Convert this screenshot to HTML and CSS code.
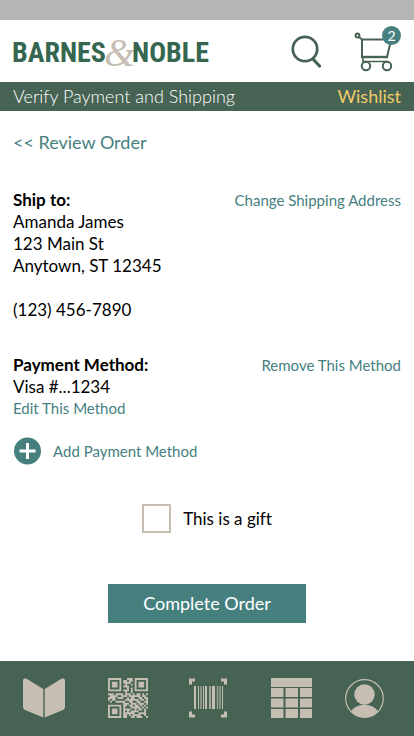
FILE: index.html
```html
<!DOCTYPE html>
<html lang="en">
<head>
<meta charset="utf-8">
<meta name="viewport" content="width=device-width, initial-scale=1">
<title>Verify Payment and Shipping</title>
<link rel="stylesheet" href="styles.css">
</head>
<body>
<div class="status"></div>
<header class="header">
  <a class="logo" href="#">BARNES<span class="amp">&amp;</span>NOBLE</a>
  <div class="tools">
    <button class="icon-button" type="button" aria-label="Search">
      <svg width="32" height="34" viewBox="0 0 32 34" fill="none" stroke="#466353"><circle cx="14" cy="15" r="12.2" stroke-width="2.8"/><path d="M22 25l6.500 7" stroke-width="3.200" stroke-linecap="round"/></svg>
    </button>
    <a class="cart" href="#" aria-label="Cart">
      <svg width="40" height="40" viewBox="0 0 40 40" fill="none" stroke="#466353" stroke-width="2"><circle cx="3.500" cy="3.500" r="1.900"/><path d="M5 5l3 2.500V25.500M8 7.500h29l-4 18"/><path d="M7 25h27" stroke-width="2.400"/><path d="M9 26v3.500h25" stroke-width="1.600"/><circle cx="12" cy="34" r="4.200"/><circle cx="33" cy="34" r="4.200"/></svg>
      <span class="count">2</span>
    </a>
  </div>
</header>
<div class="titlebar">
  <h1 class="title">Verify Payment and Shipping</h1>
  <a class="wishlist" href="#">Wishlist</a>
</div>
<main class="main">
  <a class="back" href="#">&lt;&lt; Review Order</a>
  <section class="block">
    <div class="row">
      <h2 class="heading">Ship to:</h2>
      <a class="link" href="#">Change Shipping Address</a>
    </div>
    <address class="address">Amanda James<br>123 Main St<br>Anytown, ST 12345<br><br>(123) 456-7890</address>
  </section>
  <section class="block payment">
    <div class="row">
      <h2 class="heading">Payment Method:</h2>
      <a class="link" href="#">Remove This Method</a>
    </div>
    <p class="card">Visa #...1234</p>
    <a class="link edit" href="#">Edit This Method</a>
    <button class="add" type="button">
      <svg width="28" height="28" viewBox="0 0 28 28"><circle cx="14.500" cy="14" r="13.500" fill="#45807f"/><path d="M14.500 6v16M6.500 14h16" stroke="#fff" stroke-width="3"/></svg>
      <span>Add Payment Method</span>
    </button>
  </section>
  <label class="gift"><input class="check" type="checkbox"><span>This is a gift</span></label>
  <button class="submit" type="button">Complete Order</button>
</main>
<nav class="nav">
  <a href="#" aria-label="Books"><svg width="44" height="40" viewBox="0 0 44 40" fill="#c6beb2"><path d="M1 3Q1-1 5 1L21.300 11V39.500L3 32Q1 31 1 29zM43 3Q43-1 39 1L22.700 11V39.500L41 32Q43 31 43 29z"/></svg></a>
  <a href="#" aria-label="QR code"><svg id="qr" width="40" height="40" viewBox="0 0 21 21" fill="#c6beb2"></svg></a>
  <a href="#" aria-label="Scan barcode"><svg width="40" height="40" viewBox="0 0 40 40" fill="none" stroke="#c6beb2"><path d="M1.500 6.500V2H6M32 2H36.500V6.500M36.500 33.500V38H32M6 38H1.500V33.500" stroke-width="3"/><path d="M6 8v23M17 8v23" stroke-width="2"/><path d="M9.500 8v23M14.500 8v23M33.500 8v23" stroke-width="1"/><path d="M21 8v23" stroke-width="1.500"/><path d="M24.500 8v23" stroke-width="3"/><path d="M12 8v23M28.500 8v23M31 8v23" stroke-width="1.500" opacity=".7"/></svg></a>
  <a href="#" aria-label="Calendar"><svg width="42" height="40" viewBox="0 0 42 40" fill="#c6beb2"><path d="M0 0h41v9H0zM0 10h12.500v9H0zM14.500 10h12.500v9H14.500zM29 10h12v9H29zM0 20.500h12.500v9H0zM14.500 20.500h12.500v9H14.500zM29 20.500h12v9H29zM0 31h12.500v9H0zM14.500 31h12.500v9H14.500zM29 31h12v9H29z"/></svg></a>
  <a class="account" href="#" aria-label="Account"><svg width="40" height="40" viewBox="0 0 40 40" fill="#c6beb2"><circle cx="19.500" cy="20.500" r="18.800" fill="none" stroke="#c6beb2" stroke-width="1.200"/><circle cx="19.500" cy="16.500" r="10.200"/><path d="M6 33C12.500 24.500 26.500 24.500 33 33Q27.500 39.500 19.500 39.500T6 33z"/></svg></a>
</nav>
<script src="qr.js"></script>
</body>
</html>
```
FILE: styles.css
```css
* { box-sizing: border-box; }
body { margin: 0; min-height: 100vh; display: flex; flex-direction: column; background: #fff; color: #000; font: 17px/22px Lato, sans-serif; font-variant-ligatures: none; }
a { text-decoration: none; }
h1, h2, p { margin: 0; }
button { border: 0; padding: 0; background: none; font: inherit; cursor: pointer; }
svg { display: block; }
.status { height: 20px; background: #b5b5b5; }
.header { min-height: 62px; padding: 0 13px 0 12px; display: flex; align-items: center; justify-content: space-between; }
.logo { display: flex; align-items: center; padding-top: 4px; color: #356650; font: bold 28px/40px "Roboto Condensed", "Liberation Sans Narrow", sans-serif; }
.amp { margin: 0 -3px 0 -2px; color: #c6beb2; font: italic 40px/40px "Liberation Serif", serif; }
.tools { display: flex; align-items: center; gap: 31px; }
.cart { position: relative; width: 47px; padding-top: 2px; }
.count { position: absolute; top: -4px; right: 0; width: 19px; height: 19px; border-radius: 50%; background: #45807f; color: #fff; font-size: 14px; line-height: 19px; text-align: center; }
.titlebar { min-height: 29px; padding: 0 13px; display: flex; align-items: center; justify-content: space-between; background: #466353; }
.title { color: #fff; font-size: 18px; font-weight: 300; line-height: 29px; }
.wishlist { color: #f1cb69; font-size: 18px; line-height: 29px; }
.main { flex: 1; padding: 20px 13px; display: flex; flex-direction: column; }
.back { align-self: flex-start; color: #45807f; font-size: 18px; }
.block { margin-top: 36px; }
.payment { margin-top: 33px; }
.row { display: flex; justify-content: space-between; align-items: center; }
.heading { font-size: 17px; font-weight: bold; }
.link, .add { color: #45807f; font-size: 15px; }
.edit { display: block; line-height: 20px; }
.address { font-style: normal; }
.add { display: flex; align-items: center; gap: 12px; margin-top: 19px; }
.gift { display: flex; align-items: center; align-self: center; gap: 12px; margin-top: 39px; }
.check { appearance: none; width: 29px; height: 29px; margin: 0; border: 2px solid #c6beb2; background: #fff; }
.check:checked { background: #45807f; }
.submit { align-self: center; margin-top: 51px; padding: 8px 35px; color: #fff; background: #45807f; font-size: 18px; line-height: 23px; }
.nav { min-height: 75px; padding: 0 29px 2px 22px; display: flex; align-items: center; justify-content: space-between; background: #466353; }
.account { margin-left: -9px; }
```
FILE: qr.js
```js
const rows = [
  "111111100011101111111",
  "100000101101101000001",
  "101110101111001011101",
  "101110100100101011101",
  "101110101110001011101",
  "100000100010101000001",
  "111111101110101111111",
  "000000000100100000000",
  "111011110111010110101",
  "011110011101111110110",
  "111101110010110011011",
  "101100000111111101101",
  "010011111001100110011",
  "000000001110111011101",
  "111111101101101101010",
  "100000101000111110101",
  "101110101111001011010",
  "101110101010111100010",
  "101110101111110011110",
  "100000101101011110010",
  "111111101100110111001"
];
let d = "";
rows.forEach((row, y) => {
  [...row].forEach((cell, x) => {
    if (cell === "1") d += `M${x} ${y}h1v1h-1z`;
  });
});
const path = document.createElementNS("http://www.w3.org/2000/svg", "path");
path.setAttribute("d", d);
document.getElementById("qr").append(path);
```
